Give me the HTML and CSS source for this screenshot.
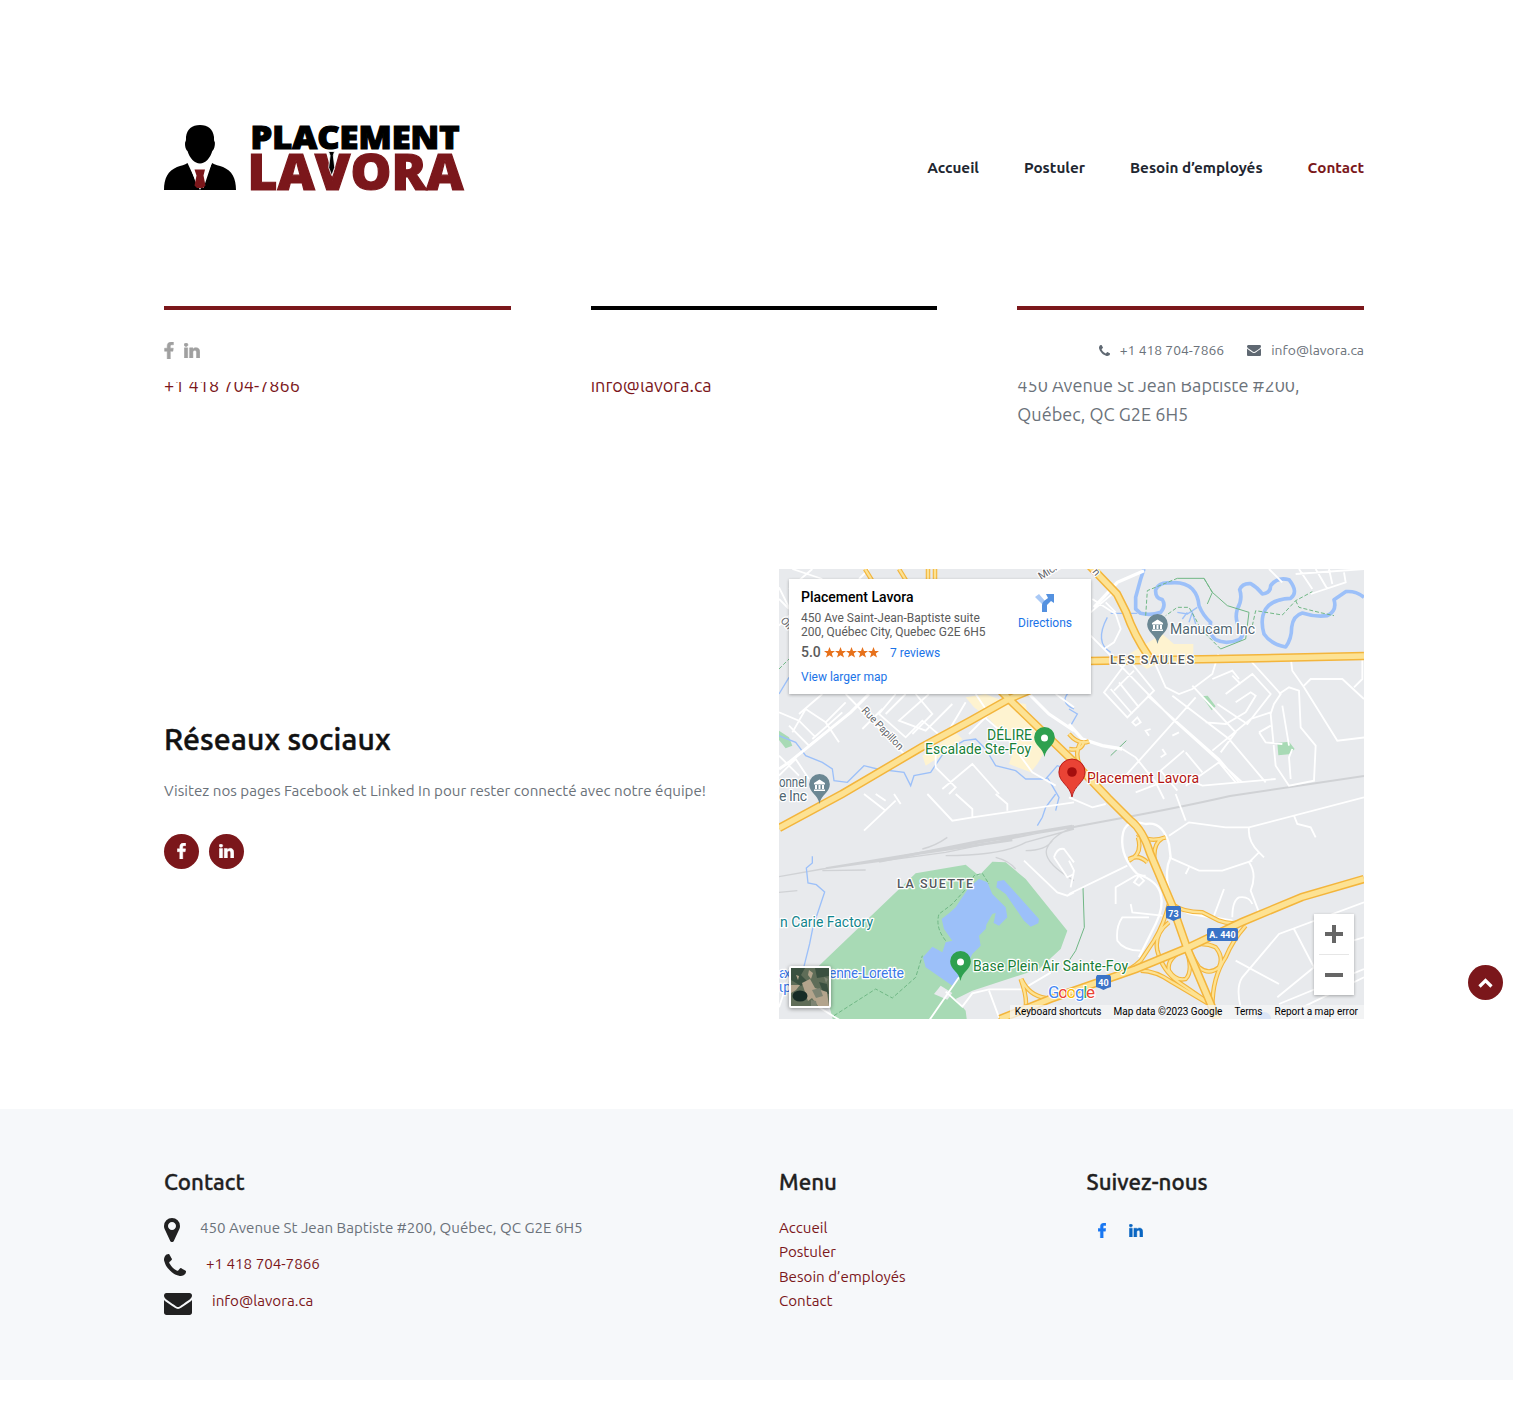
FILE: index.html
```html
<!DOCTYPE html>
<html lang="fr">
<head>
<meta charset="utf-8">
<title>Placement Lavora – Contact</title>
<link rel="stylesheet" href="styles.css">
</head>
<body>
<svg class="defs" width="0" height="0" aria-hidden="true">
  <symbol id="fb" viewBox="479 0 864 1664" overflow="visible"><path d="M1343 12v264h-157q-86 0-116 36t-30 108v189h293l-39 296h-254v759h-306v-759h-255v-296h255v-218q0-186 104-288.500t277-102.500q147 0 228 12z" stroke-width="50"/></symbol>
  <symbol id="li" viewBox="128 148 1536 1468" overflow="visible"><path d="M477 625v991h-330v-991h330zm21-306q1 73-50.500 122t-135.500 49h-2q-82 0-132-49t-50-122q0-74 51.500-122.500t134.500-48.500 133 48.500 51 122.500zm1166 729v568h-329v-530q0-105-40.500-164.500t-126.500-59.500q-63 0-105.500 34.500t-64.500 85.500q-11 30-11 81v553h-329q2-399 2-647t-1-296l-1-48h329v144h-2q20-32 41-56t56.500-52 87-43.500 114.500-15.500q171 0 275 113.500t104 332.500z" stroke-width="50"/></symbol>
  <symbol id="phone" viewBox="192 128 1408 1408"><path d="M1600 1240q0 27-10 70.500t-21 68.500q-21 50-122 106-94 51-186 51-27 0-53-3.500t-57.500-12.500-47-14.500-55.500-20.500-49-18q-98-35-175-83-127-79-264-216t-216-264q-48-77-83-175-3-9-18-49t-20.500-55.500-14.500-47-12.500-57.500-3.500-53q0-92 51-186 56-101 106-122 25-11 68.500-21t70.500-10q14 0 21 3 18 6 53 76 11 19 30 54t35 63.500 31 53.500q3 4 17.500 25t21.500 35.500 7 28.500q0 20-28.500 50t-62 55-62 53-28.500 46q0 9 5 22.500t8.500 20.500 14 24 11.500 19q76 137 174 235t235 174q2 1 19 11.500t24 14 20.500 8.500 22.500 5q18 0 46-28.500t53-62 55-62 50-28.500q14 0 28.500 7t35.500 21.500 25 17.500q25 15 53.500 31t63.500 35 54 30q70 35 76 53 3 7 3 21z"/></symbol>
  <symbol id="mail" viewBox="0 256 1792 1408"><path d="M1792 710v794q0 66-47 113t-113 47h-1472q-66 0-113-47t-47-113v-794q44 49 101 87 362 246 497 345 57 42 92.500 65.500t94.500 48 110 24.500h2q51 0 110-24.500t94.500-48 92.500-65.500q170-123 498-345 57-39 100-87zm0-294q0 79-49 151t-122 123q-376 261-468 325-10 7-42.500 31t-54 38.500-52 32.500-57.500 27-50 9h-2q-23 0-50-9t-57.500-27-52-32.500-54-38.500-42.500-31q-91-64-262-182.500t-205-142.500q-62-42-117-115.500t-55-136.500q0-78 41.500-130t118.500-52h1472q65 0 112.500 47t47.500 113z"/></symbol>
  <symbol id="marker" viewBox="384 128 1024 1536"><path d="M1152 640q0-106-75-181t-181-75-181 75-75 181 75 181 181 75 181-75 75-181zm256 0q0 109-33 179l-364 774q-16 33-47.500 52t-67.500 19-67.500-19-46.500-52l-365-774q-33-70-33-179 0-212 150-362t362-150 362 150 150 362z"/></symbol>
  <symbol id="pin" viewBox="-10 -10 20 29" overflow="visible"><path d="M0 19C-1.500 10-10 8-10 0A10 10 0 0 1 10 0C10 8 1.500 10 0 19z"/></symbol>
</svg>

<header class="header">
  <svg class="logo" viewBox="164 120 304 75" role="img" aria-label="Placement Lavora">
    <path d="M200 125c8 0 13 4 14 12 0 3 0 4 .8 5 .5 4-1 8-2.500 9-2 7-7 12.500-12.300 12.500s-10.500-5.500-12.500-12.500c-1.500-1-3-5-2.300-9 .8-1 .8-2 .8-5 1-8 6-12 14-12z"/>
    <path d="M187.500 163l12.500 27h-36c0-12 4-19 13-23 4-1.500 8-2 10.500-4zM212 163l-12 27h36c0-12-4-19-13-23-4-1.500-8-2-11-4z"/>
    <path fill="#fff" d="M189 162.500l8.500 25.500h6l8.500-25.500-6 5h-11z"/>
    <path class="red" d="M194.500 169.500h10.500l-1.500 6 2 10-2.500 2.500h-6l-2.500-2.500 2-10z"/>
    <text class="logo-text" x="250.500" y="149" font-size="32.500" stroke="#000" textLength="209" lengthAdjust="spacingAndGlyphs">PLACEMENT</text>
    <text class="logo-text red" x="247.500" y="189.500" font-size="50" stroke="#7b171b" textLength="216" lengthAdjust="spacingAndGlyphs">LAVORA</text>
    <path d="M328.500 151.500h6l-1.200 4 1.400 12-3 8-3-8 1.400-12z" stroke="#fff" stroke-width=".8"/>
  </svg>
  <nav class="nav">
    <a>Accueil</a><a>Postuler</a><a>Besoin d’employés</a><a class="active">Contact</a>
  </nav>
</header>

<main>
  <section class="cards">
    <div class="card"><a>+1 418 704-7866</a></div>
    <div class="card dark"><a>info@lavora.ca</a></div>
    <div class="card"><p>450 Avenue St Jean Baptiste #200,<br>Québec, QC G2E 6H5</p></div>
    <div class="topbar">
      <div class="topbar-social"><svg width="10" height="17"><use href="#fb"/></svg><svg width="16" height="15"><use href="#li"/></svg></div>
      <div class="topbar-info">
        <svg width="11" height="11"><use href="#phone"/></svg><span class="t-phone">+1 418 704-7866</span>
        <svg width="14" height="11"><use href="#mail"/></svg><span>info@lavora.ca</span>
      </div>
    </div>
  </section>

  <section class="social">
    <div class="social-text">
      <h2>Réseaux sociaux</h2>
      <p>Visitez nos pages Facebook et Linked In pour rester connecté avec notre équipe!</p>
      <div class="rounds"><a class="round"><svg width="9" height="16"><use href="#fb"/></svg></a><a class="round"><svg width="15" height="14"><use href="#li"/></svg></a></div>
    </div>
    <div class="map">
      <svg class="map-art" viewBox="779 569 585 450">
        <rect x="779" y="569" width="585" height="450" fill="#e8eaed"/>
        <!-- parks, commercial blocks -->
        <g transform="translate(779 569) scale(.33333)">
          <path class="park" d="M0 485l30 20 10 25-20 8-20-25z"/>
          <path class="shop" d="M560 385l60-10 50 20 70 10 10 50 55 80-30 50-20 25-65-25 25-75-50-15-20-30-20-20-40-30zM430 560l100-70 20 20-40 30-30 25-40 25z"/>
        </g>
        <g transform="translate(1069 569) scale(.33333)">
          <path class="shop" d="M180 255l100-60 35 30h58v30l-50 20-70 15-20 10z"/>
          <path class="park" d="M398 382l18-2 24 32-12 12zM625 522l35-4 17 22-17 16-32 3z"/>
        </g>
        <g transform="translate(779 794) scale(.33333)">
          <path class="park" d="M120 515L410 238 560 212 600 245 640 203 680 205 740 255 865 410 845 465 780 525 580 590 530 615 560 650 565 690 165 690z"/>
          <path class="water" d="M600 255L625 265 640 300 680 340 685 370 660 395 640 385 600 425 605 455 580 480 560 520 520 575 440 520 432 490 460 458 490 475 500 445 520 440 495 405 488 375 510 358 530 340 570 280zM655 262L675 258 780 375 778 388 755 398 735 380 680 300 652 280z"/>
          <path class="park" d="M640 360l10-3-5 25-15 35-10-5 2-20z"/>
          <path d="M465 600l20-25 35 22-15 20z" fill="#e8eaed"/>
          <path class="road" d="M540 550l-90 130M500 593l50 45 30-40 50-12h100l85-50M630 590l30 80M0 640l30-90M120 640l65 40"/>
        </g>
        <!-- railway -->
        <g class="rail" transform="translate(779 794) scale(.33333)">
          <path d="M0 248L130 225 500 175 885 95M140 222L885 100M250 208L720 125M500 185q170 0 240-40l145-40M0 295l55-5M130 230l130-2M430 165q40-10 75-35M650 190q40 10 60 35M885 100q-60 20-80 60t80 100M740 170q60 0 80-30"/>
          <path d="M300 202L600 142 880 96M420 178L700 138" style="stroke-width:8"/>
        </g>
        <path class="rail thin" d="M1069 828C1120 818 1160 812 1230 796L1364 776"/>
        <!-- streams and the river -->
        <g class="stream" transform="translate(779 569) scale(.33333)">
          <path d="M0 500l50 20 30 40 50 20 30 20 5 35 40 5 50-50 40 10 80 10 20 40 10-30 50-10 40-60 60-35 35-5 30 30 30 50 60 15 30 25h60l35-40 30 10M0 375l30-50M870 370q-30 30 15 50M805 625l35 60-10 40"/>
        </g>
        <g class="stream" transform="translate(779 794) scale(.33333)"><path d="M100 187v20l-18 15 5 45 25 5 25 22-35 105-10 50-20 80M830 0l-30 40-10 30-15 25"/></g>
        <g transform="translate(1069 569) scale(.33333)">
          <g class="stream"><path d="M125 133h80M115 145Q75 220 125 250M30 287l-20 15 10 20-20 25M0 420l25 15-20 35"/><path d="M325 130l30 5 30-20M360 160l10-30 10 35M340 150l15-20"/></g>
          <path class="river" d="M225 0L215 30 200 85 200 120 215 133Q245 140 275 130Q292 110 280 92Q258 88 260 62Q270 40 300 42Q345 36 370 60Q388 80 390 110Q402 140 425 160Q418 195 440 212Q470 228 510 212Q528 200 515 180Q495 155 505 120Q522 90 512 62Q520 42 545 44Q565 55 580 75Q605 72 605 50Q625 22 660 32Q690 70 665 88Q610 90 590 120Q572 150 585 195Q605 225 650 234Q668 210 668 175Q672 140 700 132Q740 145 775 140Q805 125 795 92L830 68Q860 65 885 85"/>
        </g>
        <!-- trails -->
        <g class="trail" transform="translate(1069 569) scale(.33333)">
          <path d="M230 140L235 65 325 28M405 28L430 70M455 240L395 180 380 150 360 115 325 115 290 140M550 170L560 125 640 138 680 95 730 68M680 95L690 115 750 130 795 140"/>
          <path class="solid" d="M325 28L405 28 430 70 475 110 540 130 530 210 455 240M430 70L415 105M125 560L172 515"/>
        </g>
        <g class="trail" transform="translate(779 794) scale(.33333)">
          <path d="M165 665L290 585 340 612 410 550 430 485M500 440Q468 400 480 360L520 330 570 275 585 245 610 238 630 270M0 -375L30 -405"/>
        </g>
        <g class="trail" transform="translate(1069 794) scale(.33333)"><path class="solid" d="M42 280L46 400 20 470 0 500"/></g>
        <!-- local streets -->
        <g class="road" transform="translate(779 569) scale(.33333)">
          <path d="M0 55l30 60M40 0l90 30M100 0l-70 60M0 90l30 30M270 0l-30 30M0 170l30-30M200 375L385 565M130 375l-70 60M200 400l-60 60 40 60M140 460l-60-40-40 70M0 430l60 25 50 50M100 510l90-80M30 470l60 60 50-40M0 560l60 60M0 620l50-50 40 60M350 375l-50 60 80 70 50-50 60 50M380 375l-60 60M450 375l-90 80 80 30 80-80M560 400l-60 100M590 375l40 60-60 60M250 480l60-60M410 375l50 60-60 60M470 545v50l60 60-20 20M490 660l90-75 80 90M600 430l80 70 80 110 70 40M830 375l55 40"/>
          <path style="stroke-width:9" d="M270 375L215 430 30 580 0 600M750 375l60 60 75 50"/>
        </g>
        <g class="road" transform="translate(1069 569) scale(.33333)">
          <path style="stroke-width:10" d="M75 115l70-75 80-35M0 465l40 45 60 20 60 10"/>
          <path d="M160 540l40 25 60 75 25 50M65 130l70-60M70 90l70 45 15 45-20 40-30 20M65 200l80 80 165 170L520 640M110 100l30 30M250 265l40 90 40 20 40-15 60-45 18-60M235 380L450 570l60 70M310 380l170 130 110 130M370 350l130 140-45 60M380 385L170 620M180 270l-75 100 70 75 80-80-65-80M125 360l65 75M150 340l60 75M195 305l-60 60M190 460l15-15 10 15-15 10zM240 500l-10-15 15-5M280 540l10 15-15 10M310 500l20-10M345 545l-70 60 50 60M350 550l50 60M350 650l100-70 50 60M540 270l95 105-20 30-10 30 15 155 40 60 75-15 5-105-45-55-5-110-30-10-30 20M605 430l-60 20-60 50-55 45M470 375l80-60 55 60-70 90-90-60M430 330l60-25 20 25M490 320l25 25M500 400l45-30 15 10-30 50M410 460l60 5 60-35M570 490l20 30 50 5M570 490l35-20M640 410l20 120M670 540l-10 25 5 65M600 0l40 40M665 265l5 40 35 50 100 160 85-10M705 350l20-20h95l65 60M855 355l25-25v-60M725 75l105-35-5-30M690 0l40 60M740 0l35 60M780 0l10 45M680 15l205-15"/>
          <path d="M200 670l130-50 70 30 220-20"/>
        </g>
        <g class="road" transform="translate(779 794) scale(.33333)">
          <path d="M350 20L255 110M255 0l65 50M290 0l30 20M365 30l-20-30M530 0l50 45v25M650 0l35 30v20M445 0l75 80 60-10 305-45"/>
          <path d="M735 200l100 95 30 10 20-10M825 190q10-30 30-25l30 40M825 190l40 60 20-10"/>
        </g>
        <g class="road" transform="translate(1069 794) scale(.33333)">
          <path d="M0 10l70 30 40-10M320 0l30 80M300 125l60-40 110 15 70 0 345-90M540 100Q535 140 570 175l-30 30Q565 240 545 290l25 65M570 175l15 15M675 65l10 25 40 10 15 30M0 300l175-85M300 190l90 40h70l90-30M350 240l10-20M435 365l30-80M140 330v-50l60-35 30 0M195 265l15-20 15 15-15 15zM0 200l15 30-10 50M185 330l5 25 90 10M240 370h-80q-20 30-15 70 20 30 70 30M490 370q0-50 20-60 30-5 40 20"/>
          <path d="M205 240q-50-50-45-110t70-40q50-10 70 60l5 40q-20 40-5 100t70 70 120 20M205 240q60 20 70 60t-15 90-50 100" style="stroke-width:7"/>
          <path d="M515 640q-15-60 5-90l110-130 255-95M675 405l60 115-110 90M500 500l130 70M630 630l255-105M700 640l185-90M750 470l135-40"/>
        </g>
        <!-- motorways: orange casing, then yellow fill -->
        <g class="ramp-case">
          <g id="ramps">
            <path d="M865 569l8 13M899 569l8 13M928 569v12M935 569v12"/>
            <path transform="translate(1069 569) scale(.33333)" d="M0 495Q30 530 60 517M0 540Q40 548 45 515M45 610Q10 560 35 520"/>
            <path transform="translate(1069 794) scale(.33333)" d="M205 120Q240 148 290 130M257 205Q250 150 280 133M207 130Q222 180 180 200M235 205Q210 180 180 195M300 330Q285 390 255 440L215 500Q190 525 150 540M300 385Q255 420 265 470Q280 530 330 565L410 620M215 530Q260 530 310 565L420 630M360 460Q290 490 300 530Q320 562 350 555Q375 530 350 460M350 460Q400 440 440 460Q465 490 450 520Q420 545 390 520L360 470M310 330Q340 355 400 355L450 380Q490 395 530 380M530 395Q490 440 470 490Q430 550 430 640M-145 555Q-125 610 -130 640M-143 555Q-120 605 -70 612M-210 680L-70 625"/>
          </g>
        </g>
        <g class="ramp-fill"><use href="#ramps"/></g>
        <g class="hwy-case">
          <path id="hw1" d="M779 828L842 794 922 747 970 721 1009 699 1030 690"/>
          <path id="hw2" d="M1000 690L1014 704 1072 760 1108 798 1130 820Q1143 830 1150 853L1172 905 1187 948 1217 1019"/>
          <path id="hw3" d="M1000 1019L1050 999 1136 969 1187 948 1242 922 1302 897 1364 879"/>
          <path id="hw4" d="M1088 661L1218 659 1364 656M1090 566L1117 594 1126 612Q1134 635 1149 657"/>
        </g>
        <g class="hwy-fill"><use href="#hw1"/><use href="#hw2"/><use href="#hw3"/><use href="#hw4"/></g>
        <circle cx="1264" cy="1019" r="7" fill="#8ab4f8"/>
        <!-- place pins -->
        <g fill="#6b8793"><use href="#pin" x="1147" y="614" width="21" height="30"/><use href="#pin" x="809" y="774" width="21" height="30"/></g>
        <g fill="#fff"><path id="bank" d="M1152 623l5.500-3.500 5.500 3.500v1.500h-11zM1153 625h2v4h-2zM1156.500 625h2v4h-2zM1160 625h2v4h-2zM1152 629.500h11v1.500h-11z"/><use href="#bank" x="-338" y="160"/></g>
        <g fill="#2ea04f"><use href="#pin" x="1034" y="727" width="21" height="30"/><use href="#pin" x="950" y="951" width="21" height="30"/></g>
        <circle cx="1044.500" cy="738" r="3.500" fill="#fff"/><circle cx="960.500" cy="962" r="3.500" fill="#fff"/>
        <use href="#pin" x="1058.500" y="759" width="27" height="38" fill="#ea4335" stroke="#b31412" stroke-width=".7"/><circle cx="1072" cy="772" r="4.800" fill="#a50e0e"/>
        <!-- labels -->
        <g class="label">
          <text x="1170" y="634" textLength="85" fill="#4f6672">Manucam Inc</text>
          <text x="779" y="787" textLength="28" lengthAdjust="spacingAndGlyphs" fill="#4f6672">onnel</text>
          <text x="779" y="801" textLength="28" fill="#4f6672">e Inc</text>
          <text x="987" y="740" textLength="45" fill="#188038">DÉLIRE</text>
          <text x="925" y="754" textLength="106" fill="#188038">Escalade Ste-Foy</text>
          <text x="1087" y="783" textLength="112" fill="#b31412">Placement Lavora</text>
          <text x="973" y="971" textLength="155" fill="#188038">Base Plein Air Sainte-Foy</text>
          <text x="780" y="927" textLength="93" fill="#12858d">n Carie Factory</text>
          <text x="829" y="978" textLength="75" fill="#3b78e7">enne-Lorette</text>
          <text x="779" y="978" textLength="12" fill="#3b78e7">ax</text><text x="779" y="992" textLength="12" fill="#3b78e7">up</text>
          <g font-size="12.500" fill="#54585c" font-weight="500"><text x="1110" y="663.500" textLength="84">LES SAULES</text><text x="897" y="887.500" textLength="76">LA SUETTE</text></g>
          <g font-size="10.500" fill="#5f6368"><text transform="translate(861 711) rotate(46)" textLength="55">Rue Papillon</text><text transform="translate(1041 580) rotate(-32)">Mich</text><text transform="translate(780 621) rotate(48)">Oli</text><text transform="translate(1092 572) rotate(50)">n</text></g>
        </g>
        <g class="shield"><path d="M1166 908l1-2h13l1 2v10q-4 1-7.500 3-3.500-2-7.500-3z"/><rect x="1207" y="928" width="31" height="13" rx="2"/><path d="M1096 977l1-2h13l1 2v10q-4 1-7.500 3-3.500-2-7.500-3z"/>
          <text x="1173.500" y="917">73</text><text x="1222.500" y="938">A. 440</text><text x="1103.500" y="986">40</text></g>
        <text class="google" x="1048" y="998" textLength="47"><tspan fill="#4285f4">G</tspan><tspan fill="#ea4335">o</tspan><tspan fill="#fbbc04">o</tspan><tspan fill="#4285f4">g</tspan><tspan fill="#34a853">l</tspan><tspan fill="#ea4335">e</tspan></text>
        <!-- satellite thumbnail -->
        <g><rect class="shadow" x="789" y="966" width="42" height="42" rx="2" fill="#fff"/><rect x="791" y="968" width="38" height="38" fill="#5f6d58"/>
          <path fill="#3a5040" d="M791 968h14l-4 7 6 6-6 5-10-6zM815 968h14v8l-12 2zM819 982l8 2 2 10-6-2z"/><path fill="#b3a48c" d="M802 983l8-4 5 9 12 4 2 14h-11l-6-8-4 3zM791 985l9 0-4 5-5 3zM809 970l4 3-2 6-3-4zM796 975l3 1-1 4z"/><path fill="#7d8473" d="M812 990l8-2 3 8-7 2zM824 977l4 2-2 4zM811 1000l5 1 1 5h-6z"/><ellipse cx="800" cy="996" rx="7.500" ry="5.500" fill="#172c26"/></g>
      </svg>
      <div class="place">
        <div><b>Placement Lavora</b><p>450 Ave Saint-Jean-Baptiste suite<br>200, Québec City, Quebec G2E 6H5</p>
          <div class="rating"><span>5.0</span><svg width="56" height="11" viewBox="0 0 56 11"><path id="star" d="M5.500 0l1.500 3.900 4 .1-3.200 2.500 1.200 4-3.500-2.300-3.500 2.300 1.200-4L0 4l4-.1z"/><use href="#star" x="11"/><use href="#star" x="22"/><use href="#star" x="33"/><use href="#star" x="44"/></svg><a>7 reviews</a></div>
          <a>View larger map</a></div>
        <div class="place-dir"><svg width="20" height="19" viewBox="0 0 20 19"><path d="M0 4l4-3 6 7-1 5z" fill="#a9c9f6"/><path d="M7 19v-7q0-2 2-4l4-3-2-4h8v9l-3-2-4 4v7z" fill="#5491e0"/></svg><a>Directions</a></div>
      </div>
      <div class="zoom"><svg width="40" height="81"><path d="M11 18h7v-7h4v7h7v4h-7v7h-4v-7h-7zM11 59h18v4H11z" fill="#666"/><path d="M5 40h30v1H5z" fill="#e6e6e6"/></svg></div>
      <div class="credits"><span>Keyboard shortcuts</span><span>Map data ©2023 Google</span><span>Terms</span><span>Report a map error</span></div>
    </div>
  </section>
</main>

<footer class="footer">
  <div class="footer-grid">
    <div><h3>Contact</h3>
      <ul class="contact-list">
        <li><svg width="16" height="24"><use href="#marker"/></svg><span>450 Avenue St Jean Baptiste #200, Québec, QC G2E 6H5</span></li>
        <li><svg width="22" height="22"><use href="#phone"/></svg><a>+1 418 704-7866</a></li>
        <li class="mail-row"><svg width="28" height="22"><use href="#mail"/></svg><a>info@lavora.ca</a></li>
      </ul></div>
    <div><h3>Menu</h3><ul class="menu-list"><li><a>Accueil</a></li><li><a>Postuler</a></li><li><a>Besoin d’employés</a></li><li><a>Contact</a></li></ul></div>
    <div><h3>Suivez-nous</h3><div class="follow"><svg class="fb" width="8" height="15"><use href="#fb"/></svg><svg class="li" width="14" height="13"><use href="#li"/></svg></div></div>
  </div>
</footer>
<a class="to-top" aria-label="Haut de page"><svg width="15" height="10" viewBox="0 0 15 10"><path d="M1.500 8.500l6-6 6 6" fill="none" stroke="#fff" stroke-width="3.200"/></svg></a>
</body>
</html>
```
FILE: styles.css
```css
* { box-sizing: border-box; }
body { margin: 0; background: #fff; color: #6b727a; font: 15.150px/24.4px Ubuntu, "Noto Sans", sans-serif; }
h2, h3, p, ul { margin: 0; padding: 0; }
ul { list-style: none; }
svg { display: block; flex: none; }
.defs { position: absolute; }
a { color: #7b171b; white-space: nowrap; }
.red { fill: #7b171b; }

.header { width: 1200px; height: 306px; margin-left: 164px; padding-top: 120px; display: flex; justify-content: space-between; align-items: flex-start; }
.logo { width: 304px; height: 75px; overflow: visible; }
.logo-text { font-family: "Open Sans", sans-serif; font-weight: 800; stroke-width: 1.200px; }
.nav { display: flex; gap: 45px; padding-top: 36px; font-weight: 700; font-size: 15.250px; }
.nav a { color: #212630; }
.nav a.active { color: #7b171b; }

.cards { position: relative; width: 1200px; height: 263px; margin-left: 164px; display: grid; grid-template-columns: repeat(3, 1fr); gap: 80px; }
.card { border-top: 4px solid #7b171b; padding-top: 61px; font-size: 18.100px; line-height: 29px; height: 130px; white-space: nowrap; }
.card.dark { border-color: #000; }
.topbar { position: absolute; left: 0; right: 0; top: 13px; height: 63px; background: #fff; display: flex; justify-content: space-between; align-items: center; font-size: 13.900px; }
.topbar-social { display: flex; gap: 10px; align-items: center; fill: #a0a0a0; stroke: #a0a0a0; }
.topbar-info { display: flex; align-items: center; fill: #5f6872; white-space: nowrap; }
.topbar-info span { margin-left: 10px; }
.topbar-info .t-phone { margin-right: 23px; }

.social { width: 1200px; margin-left: 164px; display: grid; grid-template-columns: 585px 585px; gap: 30px; align-items: center; }
h2 { color: #111; font-size: 30.200px; line-height: 40px; font-weight: 500; letter-spacing: .1px; -webkit-text-stroke: .5px #111; }
.social-text p { margin-top: 20px; white-space: nowrap; }
.rounds { display: flex; gap: 10px; margin-top: 30px; }
.round { width: 35px; height: 35px; border-radius: 50%; background: #7b171b; fill: #fff; stroke: #fff; display: flex; align-items: center; justify-content: center; }

.map { position: relative; height: 450px; overflow: hidden; font-family: Roboto, sans-serif; }
.map-art { width: 585px; height: 450px; }
.park { fill: #a8dab5; }
.shop { fill: #fef3d0; }
.water { fill: #9cc0f9; }
.road { fill: none; stroke: #fff; stroke-width: 5.500px; }
.rail { fill: none; stroke: #d0d2d5; stroke-width: 4px; }
.rail.thin { stroke-width: 2px; }
.stream { fill: none; stroke: #9cc0f9; stroke-width: 4px; }
.river { fill: none; stroke: #9cc0f9; stroke-width: 11px; stroke-linejoin: round; }
.trail { fill: none; stroke: #6fb785; stroke-width: 3px; stroke-dasharray: 12 6; }
.solid { stroke-dasharray: none; }
.ramp-case { fill: none; stroke: #f3b53c; stroke-width: 4.500px; }
.ramp-fill { fill: none; stroke: #fde293; stroke-width: 2.300px; }
.ramp-case path { vector-effect: non-scaling-stroke; }
.hwy-case { fill: none; stroke: #f3b53c; stroke-width: 8.500px; }
.hwy-fill { fill: none; stroke: #fde293; stroke-width: 5.500px; }
.label { font-size: 14px; paint-order: stroke; stroke: #fff; stroke-width: 2.500px; stroke-linejoin: round; }
.shield { fill: #3a73c7; }
.shield text { fill: #fff; font-size: 9px; font-weight: 700; text-anchor: middle; }
.google { font: 400 17px Roboto, sans-serif; paint-order: stroke; stroke: #fff; stroke-width: 2px; }
.shadow { filter: drop-shadow(0 1px 2px rgba(0,0,0,.4)); }

.place { position: absolute; left: 10px; top: 10px; width: 302px; height: 115px; padding: 10px 19px 0 12px; background: #fff; box-shadow: 0 1px 3px rgba(0,0,0,.3); display: flex; justify-content: space-between; font-size: 12px; line-height: 14px; color: #5b5b5b; white-space: nowrap; }
.place a { color: #1a73e8; }
.place b { display: block; font-size: 14px; line-height: 16px; font-weight: 500; color: #000; }
.place p { margin-top: 6px; }
.rating { display: flex; align-items: center; height: 16px; margin: 5px 0 10px; }
.rating span { font-size: 14px; font-weight: 500; width: 23px; }
.rating svg { fill: #e7711b; margin-right: 10px; }
.rating a { padding-top: 2px; }
.place-dir { display: flex; flex-direction: column; align-items: center; gap: 4px; padding-top: 4px; }
.zoom { position: absolute; right: 10px; top: 345px; background: #fff; box-shadow: 0 1px 3px rgba(0,0,0,.3); }
.credits { position: absolute; right: 0; bottom: 0; height: 14px; display: flex; gap: 12px; padding: 0 6px 0 5px; background: rgba(245,245,245,.75); color: #000; font-size: 10px; line-height: 14px; white-space: nowrap; }

.footer { margin-top: 90px; height: 271px; padding: 59px 0 0 164px; background: #f6f8fa; }
.footer-grid { width: 1200px; display: grid; grid-template-columns: 585px 277.500px 277.500px; gap: 30px; }
h3 { color: #212121; font-size: 22.300px; line-height: 28px; font-weight: 500; letter-spacing: .05px; -webkit-text-stroke: .35px #212121; }
.contact-list { margin-top: 20px; fill: #212121; }
.contact-list li { display: flex; gap: 20px; height: 36.400px; align-items: flex-start; white-space: nowrap; }
.contact-list svg { margin-top: 2px; }
.contact-list .mail-row svg { margin-top: 4px; }
.menu-list { margin-top: 20px; }
.follow { display: flex; gap: 23px; align-items: center; padding: 27px 0 0 11px; }
.fb { fill: #1877f2; stroke: #1877f2; }
.li { fill: #0a66c2; stroke: #0a66c2; }
.to-top { position: fixed; right: 10px; top: 965px; width: 35px; height: 35px; border-radius: 50%; background: #7b171b; display: flex; align-items: center; justify-content: center; }
```
